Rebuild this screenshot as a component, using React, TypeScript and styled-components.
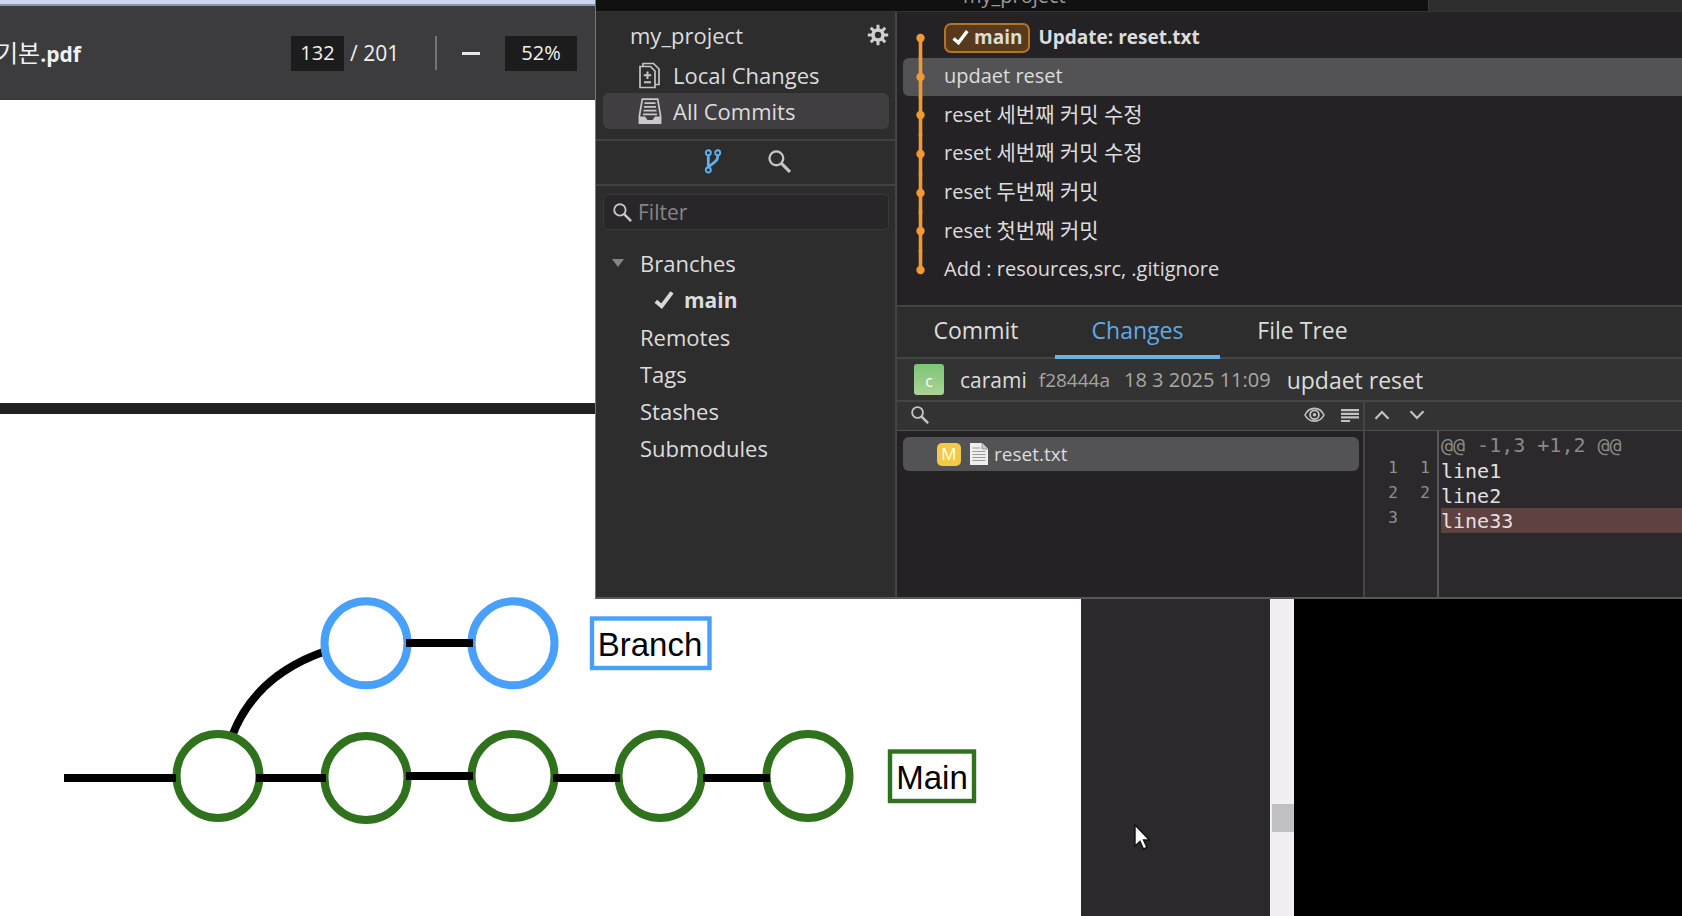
import React from "react";
import styled, { createGlobalStyle } from "styled-components";

const GlobalStyle = createGlobalStyle`
  *, *::before, *::after { box-sizing: border-box; }
  body {
    margin: 0;
    background: #000;
    font-family: "Open Sans", "Noto Sans CJK KR", sans-serif;
  }
  button, input { font: inherit; color: inherit; }
  button { border: 0; padding: 0; background: none; }
  ul { margin: 0; padding: 0; list-style: none; }
`;

const Desktop = styled.main`
  position: relative;
  display: grid;
  grid-template-columns: minmax(0, 1294px) minmax(0, 1fr);
  min-height: 100vh;
  overflow: hidden;
`;

/* PDF viewer */

const Viewer = styled.section`
  display: flex;
  flex-direction: column;
  background: #2b292c;
`;

const ViewerEdge = styled.div`
  height: 6px;
  background: #ccd6f3;
  border-bottom: 2px solid #8f94a6;
`;

const PdfToolbar = styled.header`
  display: flex;
  align-items: center;
  height: 94px;
  background: #3c3c3e;
  color: #f1f1f1;
  font-size: 20px;
  line-height: 36px;
`;

const FileName = styled.span`
  width: 295px;
  margin-left: -4px;
  font-size: 21px;
  font-weight: 700;
  white-space: nowrap;
`;

const DocHangul = styled.span`
  font-size: 24px;
  font-weight: 400;
`;

const PageInput = styled.input`
  width: 53px;
  height: 35px;
  padding: 0;
  border: 0;
  background: #1c1c1d;
  text-align: center;
`;

const PageTotal = styled.span`
  width: 91px;
  padding-left: 6px;
  font-size: 21px;
  white-space: pre;
`;

const ToolbarRule = styled.span`
  width: 2px;
  height: 34px;
  background: #747476;
`;

const ZoomOut = styled.button`
  display: grid;
  place-items: center;
  width: 68px;
  height: 35px;
`;

const ZoomLevel = styled(PageInput)`
  width: 72px;
`;

const PdfBody = styled.div`
  flex: 1;
  display: flex;
`;

const PageArea = styled.div`
  flex: 1;
  display: flex;
`;

const Pages = styled.div`
  flex: 0 1 1081px;
  display: flex;
  flex-direction: column;
  gap: 11px;
  background: #212022;
`;

const Sheet = styled.article<{ $fill?: boolean }>`
  background: #fefefe;
  ${(p) => (p.$fill ? "flex: 1;" : "height: 303px;")}
`;

const Scrollbar = styled.div`
  width: 24px;
  padding: 704px 0 0 2px;
  background: #f1eff3;
`;

const Thumb = styled.div`
  height: 28px;
  background: #c0bfc1;
`;

const Diagram = styled.svg`
  display: block;
  width: 1081px;
  height: 500px;
  font-family: "Liberation Sans", Arial, sans-serif;
  font-size: 33px;
`;

const Pointer = styled.svg`
  position: absolute;
  left: 1133px;
  top: 823px;
  width: 18px;
  height: 28px;
`;

/* Git client window */

const GitWindow = styled.section`
  position: absolute;
  top: 0;
  left: 595px;
  right: 0;
  border-left: 1px solid #77777a;
  border-bottom: 2px solid #58585a;
  background: #242224;
  color: #dcdcdc;
`;

const TitleBar = styled.header`
  display: flex;
  align-items: flex-end;
  height: 12px;
  overflow: hidden;
  border-bottom: 1px solid #333335;
  background: #101010;
  color: #9a9a9a;
`;

const WindowTab = styled.div`
  flex: 0 0 833px;
  height: 24px;
  padding-left: 367px;
  border-right: 1px solid #3c3c3c;
  font-size: 20px;
  line-height: 18px;
`;

const TabSpace = styled.div`
  flex: 1;
  height: 24px;
  background: #2d2d2d;
`;

const Columns = styled.div`
  display: grid;
  grid-template-columns: 301px minmax(0, 1fr);
`;

const Sidebar = styled.nav`
  border-right: 2px solid #454547;
  background: #2d2d2d;
  font-size: 22px;
`;

const Repo = styled.div`
  padding: 3px 6px 10px 7px;
  border-bottom: 2px solid #424244;
`;

const RepoHead = styled.div`
  display: flex;
  align-items: flex-start;
  justify-content: space-between;
  height: 42px;
  padding: 5px 0 0 27px;
  line-height: 30px;
`;

const IconButton = styled.button`
  display: grid;
  place-items: center;
`;

const Settings = styled(IconButton)`
  height: 30px;
`;

const NavItem = styled.button<{ $active?: boolean }>`
  display: flex;
  align-items: center;
  gap: 11px;
  width: 100%;
  height: 36px;
  padding-left: 35px;
  border-radius: 6px;
  background: ${(p) => (p.$active ? "#403e41" : "none")};
  white-space: nowrap;
`;

const Modes = styled.div`
  display: flex;
  justify-content: center;
  gap: 46px;
  height: 45px;
  padding: 0 0 2px 3px;
  border-bottom: 2px solid #424244;
`;

const FilterBox = styled.label`
  display: flex;
  align-items: center;
  gap: 6px;
  height: 36px;
  margin: 8px 6px 14px 7px;
  padding-left: 9px;
  border: 1px solid #39393b;
  border-radius: 5px;
  background: #282628;
`;

const FilterInput = styled.input`
  flex: 1;
  min-width: 0;
  padding: 0;
  border: 0;
  outline: 0;
  background: none;
  font-size: 21px;
  &::placeholder { color: #858585; opacity: 1; }
`;

const TreeItem = styled.li<{ $child?: boolean }>`
  display: flex;
  align-items: center;
  gap: ${(p) => (p.$child ? 10 : 16)}px;
  height: 37px;
  padding-left: ${(p) => (p.$child ? 58 : 44)}px;
  font-weight: ${(p) => (p.$child ? 700 : 400)};
  font-size: ${(p) => (p.$child ? 21 : 22)}px;
`;

const Twisty = styled.svg`
  width: 12px;
  height: 8px;
  margin-left: -28px;
`;

const Content = styled.div`
  display: flex;
  flex-direction: column;
  min-width: 0;
`;

const CommitList = styled.ul`
  display: grid;
  grid-auto-rows: 1fr;
  height: 293px;
  padding: 7px 0 16px 6px;
  font-size: 20px;
  line-height: 26px;
`;

const CommitRow = styled.li<{ $active?: boolean; $head?: boolean }>`
  display: flex;
  align-items: center;
  gap: 9px;
  min-height: 0;
  border-radius: 6px 0 0 6px;
  background: ${(p) => (p.$active ? "#535355" : "none")};
  font-weight: ${(p) => (p.$head ? 700 : 400)};
  font-size: ${(p) => (p.$head ? 19 : 20)}px;
  white-space: nowrap;
`;

const CommitText = styled.span`
  padding-bottom: 2px;
`;

const Hangul = styled.span`
  font-size: 21px;
`;

const Node = styled.svg`
  flex: none;
  width: 32px;
  height: 38px;
  overflow: visible;
`;

const HeadBadge = styled.span`
  display: flex;
  align-items: center;
  gap: 5px;
  height: 30px;
  margin-right: -1px;
  padding: 0 6px 2px 6px;
  border: 2px solid #b5722a;
  border-radius: 7px;
  background: #563a1b;
`;

const Tabs = styled.div`
  display: flex;
  height: 54px;
  border-top: 2px solid #434345;
  border-bottom: 2px solid #454547;
  background: #2d2d2d;
`;

const Tab = styled.button<{ $active?: boolean; $first?: boolean }>`
  width: ${(p) => (p.$first ? 158 : 165)}px;
  height: 52px;
  padding-bottom: 3px;
  border-bottom: 4px solid ${(p) => (p.$active ? "#6cb2e2" : "transparent")};
  color: ${(p) => (p.$active ? "#5eabe6" : "inherit")};
  font-size: 23px;
  line-height: 30px;
`;

const InfoBar = styled.div`
  display: flex;
  align-items: center;
  height: 43px;
  padding-left: 17px;
  border-bottom: 2px solid #454547;
  background: #333;
  font-size: 21px;
  white-space: nowrap;
`;

const Avatar = styled.span`
  display: grid;
  place-items: center;
  width: 30px;
  height: 31px;
  margin-right: 16px;
  padding-top: 2px;
  border-radius: 3px;
  background: linear-gradient(#7cc576, #aad495);
  color: #fff;
  font-size: 16px;
  line-height: 20px;
`;

const Hash = styled.span`
  margin: 0 14px 0 12px;
  color: #a4a4a4;
  font-size: 19px;
`;

const Stamp = styled.time`
  margin-right: 16px;
  color: #a9a9a9;
  font-size: 20px;
`;

const Message = styled.span`
  font-size: 23px;
`;

const Panes = styled.div`
  display: grid;
  grid-template-columns: 468px minmax(0, 1fr);
  height: 195px;
`;

const Pane = styled.div<{ $files?: boolean }>`
  display: flex;
  flex-direction: column;
  border-right: ${(p) => (p.$files ? "2px solid #454547" : "0")};
  background: ${(p) => (p.$files ? "#242224" : "#2b292b")};
`;

const PaneBar = styled.div`
  display: flex;
  align-items: center;
  height: 29px;
  gap: 16px;
  padding: 0 4px 2px 14px;
  border-bottom: 1px solid #505052;
  background: #333;
`;

const DiffBar = styled(PaneBar)`
  gap: 19px;
  padding-left: 9px;
`;

const Spacer = styled.span`
  flex: 1;
`;

const FileRow = styled.button`
  display: flex;
  align-items: center;
  height: 34px;
  margin: 6px 4px 0 6px;
  padding-left: 34px;
  border-radius: 6px;
  background: #535355;
  font-size: 19px;
`;

const Status = styled.span`
  display: grid;
  place-items: center;
  width: 24px;
  height: 23px;
  margin-right: 9px;
  border-radius: 5px;
  background: #f3ca45;
  color: #fff;
  font-size: 17px;
  line-height: 20px;
`;

const FileIcon = styled.svg`
  width: 18px;
  height: 22px;
  margin-right: 6px;
`;

const Diff = styled.div`
  flex: 1;
  display: grid;
  grid-template-columns: 74px minmax(0, 1fr);
  font-family: "DejaVu Sans Mono", monospace;
`;

const Gutter = styled.div`
  display: grid;
  grid-template-columns: 33px 32px;
  grid-auto-rows: 25px;
  align-content: start;
  border-right: 2px solid #58585a;
  padding-top: 24px;
  color: #929292;
  font-size: 16px;
  line-height: 25px;
  text-align: right;
`;

const Code = styled.div`
  padding: 1px 0 0 2px;
  font-size: 20px;
  line-height: 26px;
`;

const CodeLine = styled.div<{ $kind?: "hunk" | "removed" }>`
  height: ${(p) => (p.$kind === "hunk" ? 26 : 25)}px;
  color: ${(p) => (p.$kind === "hunk" ? "#8a8a8a" : "#e2e0e0")};
  background: ${(p) => (p.$kind === "removed" ? "#5f4140" : "none")};
  white-space: pre;
`;

const Check = ({ size = 20, color = "#d8d8d8" }) => (
  <svg width={size} height={size} viewBox="0 0 20 20" aria-hidden="true">
    <path d="M1.8 11.2 L7.6 16.2 L18 2.4" fill="none" stroke={color} strokeWidth="4" />
  </svg>
);

const Magnifier = ({ size = 22 }) => (
  <svg width={size} height={size} viewBox="0 0 22 22" aria-hidden="true" fill="none" stroke="#c6c6c6">
    <circle cx="8" cy="8" r="6.6" strokeWidth="2.2" />
    <path d="M12.6 12.6 L21 21" strokeWidth="3" />
  </svg>
);

const Gear = () => (
  <svg width="22" height="22" viewBox="-11 -11 22 22" aria-hidden="true" stroke="#d0d0d0" fill="none">
    <circle r="5" strokeWidth="3.6" />
    {[0, 45, 90, 135, 180, 225, 270, 315].map((a) => (
      <path key={a} d="M0 -5.5 V-10.2" strokeWidth="3" transform={`rotate(${a})`} />
    ))}
  </svg>
);

const LocalIcon = () => (
  <svg width="24" height="27" viewBox="0 0 24 27" aria-hidden="true" fill="none" stroke="#c4c4c4" strokeWidth="1.7">
    <path d="M2 4.5 H12.5 L17 9 V25.5 H2 Z" />
    <path d="M5 4.5 V1.5 H15.5 L21 7 V22.5 H17" />
    <path d="M9.5 9.5 V17 M5.8 13.2 H13.2 M6 20.3 H13" strokeWidth="2" />
  </svg>
);

const CommitsIcon = () => (
  <svg width="24" height="27" viewBox="0 0 24 27" aria-hidden="true" fill="none" stroke="#c9c9c9" strokeWidth="1.7">
    <path d="M4.3 1.2 H19.7 L22.6 18 V25 H1.4 V18 Z" />
    <path d="M6.5 5.2 H17.5 M6 8.9 H18 M5.5 12.6 H18.5 M5 16.3 H19" strokeWidth="1.8" />
    <path d="M1 18.5 H7 L9.5 22 H14.5 L17 18.5 H23 V26 H1 Z" fill="#c9c9c9" stroke="none" />
  </svg>
);

const BranchIcon = () => (
  <svg width="18" height="25" viewBox="0 0 18 25" aria-hidden="true" fill="none" stroke="#5fb0ee" strokeWidth="1.9">
    <circle cx="4.3" cy="3.7" r="2.5" />
    <circle cx="13.7" cy="3.7" r="2.5" />
    <circle cx="4.3" cy="21" r="2.5" />
    <path d="M4.3 6.2 V18.5 M13.7 6.2 C14 12.5 10 13 5 17.5" strokeWidth="2.8" />
  </svg>
);

const EyeIcon = () => (
  <svg width="21" height="16" viewBox="0 0 21 16" aria-hidden="true" fill="none" stroke="#c2c2c2" strokeWidth="1.6">
    <path d="M1 8 C5 -0.8 16 -0.8 20 8 C16 16.2 5 16.2 1 8 Z" />
    <circle cx="10.5" cy="7.8" r="4.4" strokeWidth="1.8" />
    <circle cx="10.5" cy="7.8" r="1.8" fill="#c2c2c2" stroke="none" />
  </svg>
);

const LinesIcon = () => (
  <svg width="18" height="13" viewBox="0 0 18 13" aria-hidden="true" stroke="#c2c2c2" strokeWidth="2.2">
    <path d="M0 1.2 H18 M0 4.8 H18 M0 8.4 H18 M0 12 H9" />
  </svg>
);

const Chevron = ({ up = false }) => (
  <svg width="16" height="10" viewBox="0 0 16 10" aria-hidden="true" fill="none" stroke="#c2c2c2" strokeWidth="2.2">
    <path d={up ? "M1.5 8.8 L8 2 L14.5 8.8" : "M1.5 1.2 L8 8 L14.5 1.2"} />
  </svg>
);

type Commit = { text: string; korean?: string; head?: boolean; active?: boolean };

const commits: Commit[] = [
  { text: "Update: reset.txt", head: true },
  { text: "updaet reset", active: true },
  { text: "reset ", korean: "세번째 커밋 수정" },
  { text: "reset ", korean: "세번째 커밋 수정" },
  { text: "reset ", korean: "두번째 커밋" },
  { text: "reset ", korean: "첫번째 커밋" },
  { text: "Add : resources,src, .gitignore" },
];

const mainNodes = [
  [218, 362], [366, 364], [513, 362], [660, 362], [808, 362],
];
const links = [
  [64, 176, 364], [256, 326, 364], [406, 473, 362], [553, 620, 364], [703, 770, 364], [406, 473, 229],
];

const BranchDiagram = () => (
  <Diagram viewBox="0 0 1081 500" role="img" aria-label="Branch and Main commit history">
    <path d="M232 322 C247 283 276 254 326 237" fill="none" stroke="#000" strokeWidth="8" />
    {[366, 513].map((x) => (
      <ellipse key={x} cx={x} cy="229.3" rx="41.5" ry="42" fill="#fefefe" stroke="#48a0fa" strokeWidth="8" />
    ))}
    {mainNodes.map(([x, y]) => (
      <ellipse key={x} cx={x} cy={y} rx="41.5" ry="42" fill="#fefefe" stroke="#30711d" strokeWidth="8" />
    ))}
    {links.map(([from, to, y]) => (
      <path key={`${from}-${y}`} d={`M${from} ${y} H${to}`} stroke="#000" strokeWidth="8" />
    ))}
    <rect x="592" y="204.5" width="117.5" height="49.5" fill="none" stroke="#48a0fa" strokeWidth="4.4" />
    <text x="650" y="242" textAnchor="middle">Branch</text>
    <rect x="890" y="337.5" width="84" height="49.5" fill="none" stroke="#30711d" strokeWidth="4.4" />
    <text x="932" y="375" textAnchor="middle">Main</text>
  </Diagram>
);

export default function App() {
  return (
    <>
      <GlobalStyle />
      <Desktop>
        <Viewer>
          <ViewerEdge />
          <PdfToolbar>
            <FileName><DocHangul>기본</DocHangul>.pdf</FileName>
            <PageInput aria-label="Page" defaultValue="132" />
            <PageTotal>/ 201</PageTotal>
            <ToolbarRule />
            <ZoomOut aria-label="Zoom out">
              <svg width="18" height="3" aria-hidden="true"><path d="M0 1.5 H18" stroke="#e8e8e8" strokeWidth="3" /></svg>
            </ZoomOut>
            <ZoomLevel aria-label="Zoom" defaultValue="52%" />
          </PdfToolbar>
          <PdfBody>
            <PageArea>
              <Pages>
                <Sheet />
                <Sheet $fill><BranchDiagram /></Sheet>
              </Pages>
            </PageArea>
            <Scrollbar><Thumb /></Scrollbar>
          </PdfBody>
        </Viewer>

        <GitWindow>
          <TitleBar>
            <WindowTab>my_project</WindowTab>
            <TabSpace />
          </TitleBar>
          <Columns>
            <Sidebar>
              <Repo>
                <RepoHead>
                  my_project
                  <Settings aria-label="Settings"><Gear /></Settings>
                </RepoHead>
                <NavItem><LocalIcon />Local Changes</NavItem>
                <NavItem $active><CommitsIcon />All Commits</NavItem>
              </Repo>
              <Modes>
                <IconButton aria-label="Branches"><BranchIcon /></IconButton>
                <IconButton aria-label="Search"><Magnifier size={23} /></IconButton>
              </Modes>
              <FilterBox>
                <Magnifier size={19} />
                <FilterInput aria-label="Filter" placeholder="Filter" />
              </FilterBox>
              <ul>
                <TreeItem>
                  <Twisty viewBox="0 0 12 8" aria-hidden="true"><path d="M0 0 H12 L6 8 Z" fill="#858585" /></Twisty>
                  Branches
                </TreeItem>
                <TreeItem $child><Check />main</TreeItem>
                <TreeItem>Remotes</TreeItem>
                <TreeItem>Tags</TreeItem>
                <TreeItem>Stashes</TreeItem>
                <TreeItem>Submodules</TreeItem>
              </ul>
            </Sidebar>

            <Content>
              <CommitList>
                {commits.map((c, i) => (
                  <CommitRow key={i} $active={c.active} $head={c.head}>
                    <Node viewBox="0 0 32 38" aria-hidden="true">
                      <path
                        d={`M17.5 ${i === 0 ? 19 : -1} V${i === commits.length - 1 ? 19 : 40}`}
                        stroke="#f09a35"
                        strokeWidth="3.6"
                      />
                      <circle cx="17.5" cy="19" r="4.2" fill="#f09a35" />
                    </Node>
                    {c.head && <HeadBadge><Check size={17} color="#fff" />main</HeadBadge>}
                    <CommitText>
                      {c.text}
                      {c.korean && <Hangul>{c.korean}</Hangul>}
                    </CommitText>
                  </CommitRow>
                ))}
              </CommitList>
              <Tabs>
                <Tab $first>Commit</Tab>
                <Tab $active>Changes</Tab>
                <Tab>File Tree</Tab>
              </Tabs>
              <InfoBar>
                <Avatar>c</Avatar>
                carami
                <Hash>f28444a</Hash>
                <Stamp>18 3 2025 11:09</Stamp>
                <Message>updaet reset</Message>
              </InfoBar>
              <Panes>
                <Pane $files>
                  <PaneBar>
                    <IconButton aria-label="Search files"><Magnifier size={18} /></IconButton>
                    <Spacer />
                    <IconButton aria-label="Preview"><EyeIcon /></IconButton>
                    <IconButton aria-label="List view"><LinesIcon /></IconButton>
                  </PaneBar>
                  <FileRow>
                    <Status>M</Status>
                    <FileIcon viewBox="0 0 18 22" aria-hidden="true">
                      <path d="M0 0 H12 L18 6 V22 H0 Z" fill="#eee" />
                      <path d="M12 0 V6 H18" fill="#c9c9c9" stroke="#999" />
                      <path d="M2.5 5 H10 M2.5 8.5 H15.5 M2.5 11.5 H15.5 M2.5 14.5 H15.5 M2.5 17.5 H15.5" stroke="#9a9a9a" strokeWidth="1.2" />
                    </FileIcon>
                    reset.txt
                  </FileRow>
                </Pane>
                <Pane>
                  <DiffBar>
                    <IconButton aria-label="Previous change"><Chevron up /></IconButton>
                    <IconButton aria-label="Next change"><Chevron /></IconButton>
                  </DiffBar>
                  <Diff>
                    <Gutter>
                      <span>1</span><span>1</span>
                      <span>2</span><span>2</span>
                      <span>3</span>
                    </Gutter>
                    <Code>
                      <CodeLine $kind="hunk">@@ -1,3 +1,2 @@</CodeLine>
                      <CodeLine>line1</CodeLine>
                      <CodeLine>line2</CodeLine>
                      <CodeLine $kind="removed">line33</CodeLine>
                    </Code>
                  </Diff>
                </Pane>
              </Panes>
            </Content>
          </Columns>
        </GitWindow>

        <Pointer viewBox="0 0 18 28" aria-hidden="true">
          <path d="M2 2 V23 L7 18.5 L10.5 26 L14 24.5 L10.5 17 H16.5 Z" fill="#fff" stroke="#111" strokeWidth="1.4" />
        </Pointer>
      </Desktop>
    </>
  );
}
